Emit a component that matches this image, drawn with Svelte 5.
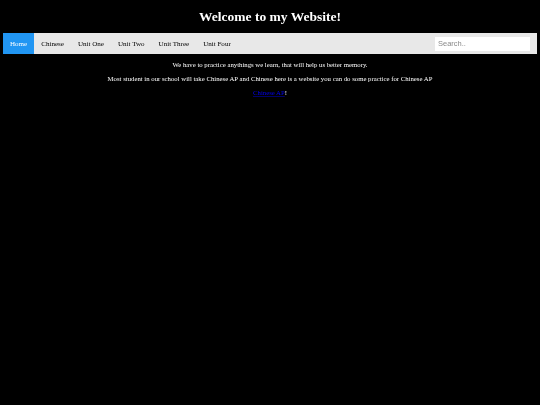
<script lang="ts">
	const links = ['Home', 'Chinese', 'Unit One', 'Unit Two', 'Unit Three', 'Unit Four'];
</script>

<div class="page">
	<h1>Welcome to my Website!</h1>

	<nav class="topnav">
		{#each links as link, i}
			<a href="#{link}" class:active={i === 0}>{link}</a>
		{/each}
		<input type="text" placeholder="Search.." />
	</nav>

	<main>
		<p>We have to practice anythings we learn, that will help us better memory.</p>
		<p>Most student in our school will take Chinese AP and Chinese here is a website you can do some practice for Chinese AP</p>
		<p><a class="inline" href="#ap">Chinese AP</a>!</p>
	</main>
</div>

<style>
	:global(body) {
		margin: 0;
		background: #000;
		color: #fff;
		font-family: "Liberation Serif", serif;
	}

	/* own layer, so the small text gets grayscale antialiasing */
	.page {
		will-change: transform;
	}

	h1 {
		margin: 0;
		padding: 9px 0 8px;
		font-size: 13.5px;
		line-height: 16px;
		font-weight: bold;
		text-align: center;
	}

	.topnav {
		display: flex;
		align-items: stretch;
		margin: 0 3px;
		height: 21px;
		background: #e8e8e8;
	}

	.topnav a {
		display: flex;
		align-items: center;
		padding: 0 7px;
		font-size: 7.05px;
		color: #000;
		text-decoration: none;
	}

	.topnav a.active {
		background: #2196f3;
		color: #fff;
	}

	input {
		box-sizing: border-box;
		width: 95px;
		height: 14px;
		margin: 4px 7px 3px auto;
		padding: 0 3px 1px;
		border: none;
		outline: none;
		background: #fff;
		font-family: "Liberation Sans", sans-serif;
		font-size: 7.5px;
	}

	input::placeholder {
		color: #8a8a8a;
	}

	main {
		padding-top: 7px;
		text-align: center;
		font-size: 6.75px;
		line-height: 8px;
		color: #fff;
	}

	p {
		margin: 0 0 6px;
	}

	.inline {
		color: #00e;
		text-decoration-color: #00006a;
	}
</style>
